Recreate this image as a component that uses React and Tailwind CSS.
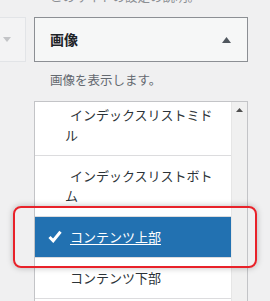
import React from 'react';

const font = { fontFamily: '"Noto Sans CJK JP", "Noto Sans", sans-serif' };

function Item({ children, selected, tall }) {
    if (selected) {
        return (
            <div className="relative h-[41px] border-b border-[#dcdcde] bg-[#2271b1] pl-[35px] pt-[10px] text-[13px] leading-[20px] text-white">
                <svg className="absolute left-[13px] top-[13px]" width="14" height="13" viewBox="0 0 14 13">
                    <path d="M1.5 7 L5.2 10.8 L12.5 1.8" fill="none" stroke="#fff" strokeWidth="3" strokeLinejoin="miter" />
                </svg>
                <span className="underline underline-offset-2">{children}</span>
            </div>
        );
    }
    return (
        <div className={`${tall ? 'h-[61px]' : 'h-[41px]'} border-b border-[#dcdcde] bg-white py-[10px] pl-[30px] pr-[10px] indent-[5px] text-[13px] leading-[20px] text-[#2c3338]`}>
            {children}
        </div>
    );
}

export default function App() {
    return (
        <div className="relative h-[301px] w-[270px] overflow-hidden bg-[#f0f0f1]" style={font}>
            <div className="mt-[-13px] pl-[50px] text-[12.5px] leading-[20px] text-[#8c8f94]">このサイトの設定の説明。</div>

            <div className="mt-[10px] flex">
                <div className="flex h-[45px] w-[26px] items-center border border-l-0 border-[#e2e4e7] bg-[#f3f3f4] pl-[3px]">
                    <svg width="8" height="5" viewBox="0 0 8 5"><path d="M0 0 H8 L4 5 Z" fill="#c3c4c7" /></svg>
                </div>
                <div className="ml-[8px] flex h-[45px] w-[214px] items-center justify-between border border-[#8c8f94] bg-[#f6f7f7] pl-[15px] pr-[16px]">
                    <span className="text-[14px] font-bold text-[#1d2327]">画像</span>
                    <svg width="9" height="6" viewBox="0 0 9 6"><path d="M0 6 H9 L4.5 0 Z" fill="#50575e" /></svg>
                </div>
            </div>

            <div className="mt-[8px] pl-[50px] text-[12.5px] leading-[20px] text-[#646970]">画像を表示します。</div>

            <div className="ml-[34px] mt-[11px] flex h-[210px] w-[214px] overflow-hidden border border-b-0 border-[#c3c4c7]">
                <div className="w-[196px] shrink-0 bg-white">
                    <div className="mt-[-7px]">
                        <Item tall>インデックスリストミドル</Item>
                        <Item tall>インデックスリストボトム</Item>
                        <Item selected>コンテンツ上部</Item>
                        <Item>コンテンツ下部</Item>
                    </div>
                </div>
                <div className="flex-1 border-l border-[#e6e6e6] bg-[#f0f0f0] pt-[6px]">
                    <svg className="mx-auto" width="7" height="4" viewBox="0 0 7 4"><path d="M0 4 H7 L3.5 0 Z" fill="#505050" /></svg>
                </div>
            </div>

            <div className="absolute left-[13px] top-[206px] h-[62px] w-[244px] rounded-[8px] border-2 border-[#e8222a] shadow-[0_0_6px_rgba(0,0,0,0.25)]"></div>
        </div>
    );
}
